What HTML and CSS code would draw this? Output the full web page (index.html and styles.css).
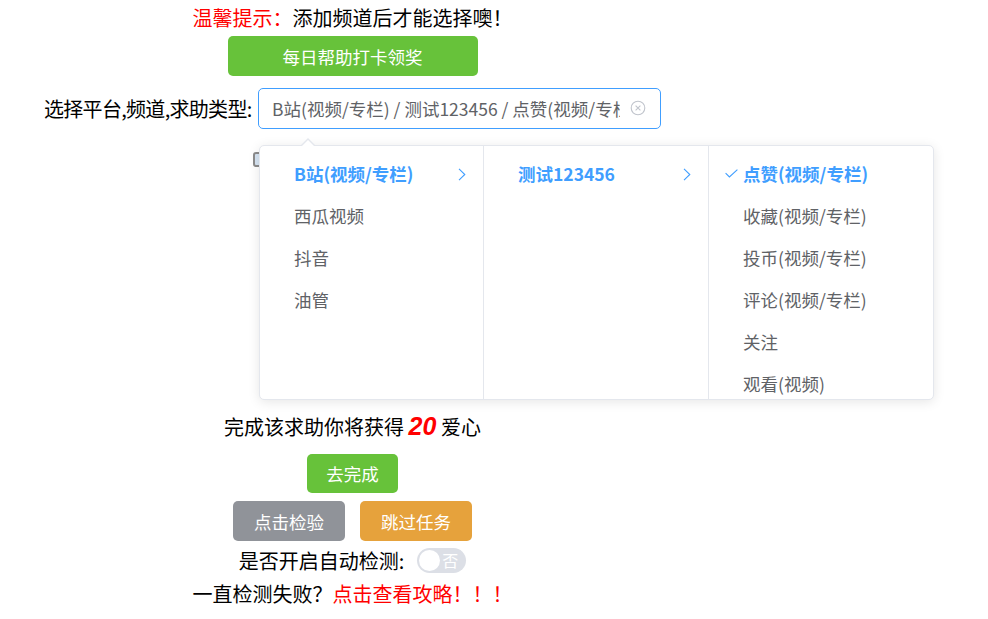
FILE: index.html
```html
<!DOCTYPE html>
<html lang="zh-CN">
<head>
<meta charset="utf-8">
<title>每日帮助</title>
<link rel="stylesheet" href="styles.css">
</head>
<body>
<div class="page">
  <div class="tip"><span class="red">温馨提示：</span>添加频道后才能选择噢！</div>
  <button class="btn btn-green btn-daily">每日帮助打卡领奖</button>

  <div class="select-row">
    <div class="select-label">选择平台,频道,求助类型:</div>
    <div class="cascader">
      <div class="cascader-value">B站(视频/专栏) / 测试123456 / 点赞(视频/专栏)</div>
      <svg class="clear-icon" width="16" height="16" viewBox="0 0 16 16">
        <circle cx="8" cy="8" r="6.8" fill="none" stroke="#C0C4CC" stroke-width="1.1"/>
        <path d="M5.6 5.6 L10.4 10.4 M10.4 5.6 L5.6 10.4" stroke="#C0C4CC" stroke-width="1.1"/>
      </svg>

      <div class="cascader-panel">
        <ul class="menu">
          <li class="node active">B站(视频/专栏)<svg class="chev" width="8" height="13" viewBox="0 0 8 13"><path d="M1 0.8 L6.8 6.5 L1 12.2" fill="none" stroke="#409EFF" stroke-width="1.1"/></svg></li>
          <li class="node">西瓜视频</li>
          <li class="node">抖音</li>
          <li class="node">油管</li>
        </ul>
        <ul class="menu">
          <li class="node active">测试123456<svg class="chev" width="8" height="13" viewBox="0 0 8 13"><path d="M1 0.8 L6.8 6.5 L1 12.2" fill="none" stroke="#409EFF" stroke-width="1.1"/></svg></li>
        </ul>
        <ul class="menu menu-last">
          <li class="node active"><svg class="check" width="13" height="9" viewBox="0 0 13 9"><path d="M0.6 4.2 L4.4 8 L12.4 0.6" fill="none" stroke="#409EFF" stroke-width="1.1"/></svg>点赞(视频/专栏)</li>
          <li class="node">收藏(视频/专栏)</li>
          <li class="node">投币(视频/专栏)</li>
          <li class="node">评论(视频/专栏)</li>
          <li class="node">关注</li>
          <li class="node">观看(视频)</li>
        </ul>
      </div>
    </div>
  </div>

  <div class="preview">
    <div class="preview-thumb"></div>
  </div>

  <div class="reward">完成该求助你将获得 <span class="num">20</span> 爱心</div>
  <button class="btn btn-green btn-go">去完成</button>
  <div class="btn-row">
    <button class="btn btn-gray btn-mid">点击检验</button>
    <button class="btn btn-orange btn-mid">跳过任务</button>
  </div>
  <div class="auto">
    <span>是否开启自动检测:</span>
    <span class="switch"><span class="switch-dot"></span><span class="switch-text">否</span></span>
  </div>
  <div class="fail">一直检测失败？<span class="red">点击查看攻略！！！</span></div>
</div>
</body>
</html>
```

FILE: styles.css
```css
html, body {
  margin: 0;
  padding: 0;
  background: #fff;
}

.page {
  width: 705px;
  display: flex;
  flex-direction: column;
  align-items: center;
  font-family: "Noto Sans CJK SC", "Microsoft YaHei", sans-serif;
  font-size: 20px;
  color: #000;
}

.red {
  color: #ff0000;
}

.tip {
  height: 36px;
  line-height: 36px;
  white-space: nowrap;
}

.btn {
  border: none;
  border-radius: 5px;
  color: #fff;
  font-family: inherit;
  font-size: 17.5px;
  padding: 0;
  display: flex;
  align-items: center;
  justify-content: center;
}

.btn-green { background: #67c23a; }
.btn-gray { background: #909399; }
.btn-orange { background: #e6a23c; }

.btn-daily {
  width: 250px;
  height: 40px;
}

.select-row {
  margin-top: 12px;
  display: flex;
  align-items: center;
  position: relative;
  z-index: 5;
}

.select-label {
  width: 214px;
  white-space: nowrap;
  letter-spacing: -0.7px;
  overflow: visible;
}

.cascader {
  position: relative;
  width: 403px;
  height: 41px;
  box-sizing: border-box;
  border: 1px solid #409eff;
  border-radius: 5px;
  padding: 0 40px 0 13px;
  display: flex;
  align-items: center;
  background: #fff;
}

.cascader-value {
  flex: 1;
  overflow: hidden;
  white-space: nowrap;
  font-size: 17.5px;
  color: #606266;
}

.clear-icon {
  position: absolute;
  right: 14px;
  top: 11px;
}

.cascader-panel {
  position: absolute;
  top: 56px;
  left: 0;
  width: 675px;
  height: 255px;
  box-sizing: border-box;
  border: 1px solid #e4e7ed;
  border-radius: 5px;
  background: #fff;
  box-shadow: 0 2px 12px 0 rgba(0, 0, 0, 0.1);
  display: flex;
}

.cascader-panel::before,
.cascader-panel::after {
  content: "";
  position: absolute;
  left: 41px;
  width: 0;
  height: 0;
  border-left: 7.5px solid transparent;
  border-right: 7.5px solid transparent;
}

.cascader-panel::before {
  top: -8px;
  border-bottom: 7.5px solid #e4e7ed;
}

.cascader-panel::after {
  top: -6.5px;
  border-bottom: 7.5px solid #fff;
}

.menu {
  list-style: none;
  margin: 0;
  padding: 7px 0;
  width: 224px;
  flex: none;
  box-sizing: border-box;
  border-right: 1px solid #e4e7ed;
  overflow: hidden;
  height: 100%;
}

.menu + .menu {
  width: 225px;
}

.menu.menu-last {
  border-right: none;
  flex: 1;
  width: auto;
}

.node {
  position: relative;
  height: 42px;
  line-height: 42px;
  padding-left: 34px;
  font-size: 17.5px;
  color: #606266;
  white-space: nowrap;
}

.node.active {
  color: #409eff;
  font-weight: 700;
}

.chev {
  position: absolute;
  right: 17px;
  top: 15px;
}

.check {
  position: absolute;
  left: 16px;
  top: 16px;
}

.preview {
  align-self: flex-start;
  margin: 23px 0 0 253px;
  width: 300px;
  height: 256px;
}

.preview-thumb {
  width: 200px;
  height: 15px;
  box-sizing: border-box;
  border: 2px solid #8c8c8c;
  border-radius: 3px;
  background: #d6e4f2;
}

.reward {
  height: 36px;
  line-height: 36px;
  white-space: nowrap;
}

.num {
  color: #ff0000;
  font-family: "Liberation Sans", Arial, sans-serif;
  font-weight: 700;
  font-style: italic;
  font-size: 25px;
}

.btn-go {
  margin-top: 10px;
  width: 91px;
  height: 39px;
}

.btn-row {
  margin-top: 8px;
  display: flex;
  gap: 15px;
}

.btn-mid {
  width: 112px;
  height: 40px;
}

.auto {
  margin-top: 4px;
  height: 30px;
  display: flex;
  align-items: center;
  gap: 13px;
  white-space: nowrap;
}

.switch {
  width: 49px;
  height: 25px;
  border-radius: 13px;
  background: #dcdfe6;
  display: flex;
  align-items: center;
}

.switch-dot {
  width: 21px;
  height: 21px;
  margin-left: 2px;
  border-radius: 50%;
  background: #fff;
}

.switch-text {
  margin-left: 2px;
  font-size: 16px;
  line-height: 1;
  color: #fff;
}

.fail {
  height: 38px;
  line-height: 38px;
  white-space: nowrap;
}
```
